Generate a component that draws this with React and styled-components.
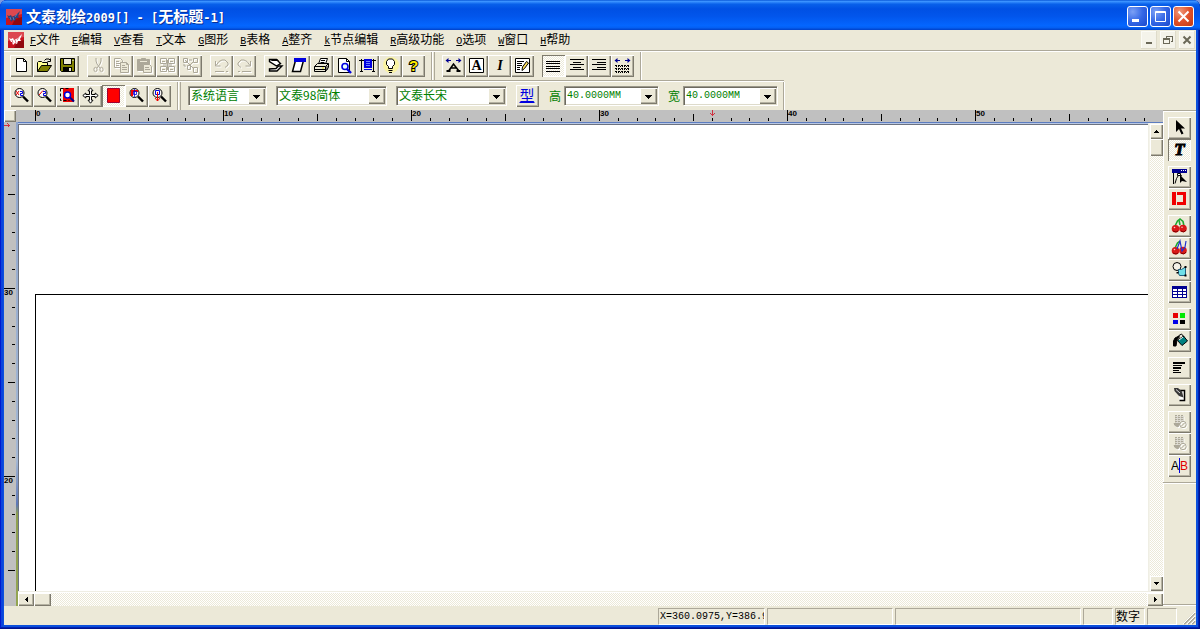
import React from "react";
import styled, { createGlobalStyle, css } from "styled-components";

const GlobalStyle = createGlobalStyle`
  * {
    box-sizing: border-box;
  }
  body {
    margin: 0;
    background: #7b9be0;
    color: #000;
    font-family: "Noto Sans CJK SC", "Liberation Sans", sans-serif;
    font-size: 12px;
    line-height: 16px;
  }
`;

const dither = css`
  background: repeating-conic-gradient(#ffffff 0 25%, #ece9d8 0 50%) 0 0 / 2px 2px;
`;

const raised = css`
  background: #ece9d8;
  border: none;
  border-radius: 0;
  box-shadow: inset 1px 1px 0 #fff, inset -1px -1px 0 #7d7a6d,
    inset -2px -2px 0 #b5b2a2;
`;

const Window = styled.div`
  display: flex;
  flex-direction: column;
  min-height: 100vh;
  padding: 0 4px 4px;
  border-radius: 7px 7px 0 0;
  overflow: hidden;
  background: #0b50dc;
  box-shadow: inset -1px -1px 0 #00138c, inset 1px 0 0 #0019cf,
    inset -2px -2px 0 #0022b4, inset 3px 0 0 #0a43dd;
`;

const TitleBar = styled.header`
  display: flex;
  align-items: center;
  height: 30px;
  margin: 0 -4px;
  padding: 3px 6px 0;
  gap: 4px;
  background: linear-gradient(
    180deg,
    #0a58d8 0,
    #3a92ff 5%,
    #0860ea 14%,
    #0050e4 30%,
    #0256ec 55%,
    #0466ff 85%,
    #0460f4 92%,
    #0040c8 100%
  );
`;

const Title = styled.h1`
  flex: 1;
  margin: 0;
  color: #fff;
  font-size: 15px;
  line-height: 20px;
  font-weight: 700;
  text-shadow: 1px 1px 0 #0a2f96;
  white-space: pre;
`;

const TitleLatin = styled.span`
  font-family: "DejaVu Sans Mono", monospace;
  font-size: 12px;
`;

const CaptionButtons = styled.div`
  display: flex;
  gap: 2px;
`;

const CaptionButton = styled.button`
  width: 21px;
  height: 21px;
  padding: 0;
  display: flex;
  align-items: center;
  justify-content: center;
  border: 1px solid #fff;
  border-radius: 3px;
  background: ${(p) =>
    p.$close
      ? "radial-gradient(circle at 30% 25%, #f09a7c, #e0502a 50%, #c23a12)"
      : "radial-gradient(circle at 25% 25%, #7ba0f5, #3467e6 50%, #1a48cc)"};
`;

const MenuBar = styled.nav`
  display: flex;
  align-items: center;
  height: 20px;
  padding: 0 1px 0 4px;
  background: #ece9d8;
`;

const MenuLink = styled.a`
  padding: 0 6px;
  color: #000;
  text-decoration: none;
  white-space: nowrap;
`;

const Hotkey = styled.span`
  font-family: "Liberation Mono", monospace;
  font-size: 10px;
  text-decoration: underline;
`;

const MdiButtons = styled.div`
  display: flex;
  gap: 3px;
  margin-left: auto;
`;

const MdiButton = styled.button`
  width: 16px;
  height: 18px;
  padding: 0;
  display: flex;
  align-items: center;
  justify-content: center;
  border: none;
  background: #f4f3ea;
  box-shadow: inset -1px -1px 0 #dedbca, inset 1px 1px 0 #fbfbf6;
`;

const ToolArea = styled.div`
  border-top: 1px solid #aca899;
  box-shadow: inset 0 1px 0 #fff;
  background: #ece9d8;
  padding-top: 1px;
`;

const ToolRow = styled.div`
  display: flex;
  width: fit-content;
  height: 28px;
`;

const SecondRow = styled(ToolRow)`
  height: 30px;
  padding-top: 1px;
  border-top: 1px solid #aca899;
  box-shadow: inset 0 1px 0 #fff;
`;

const Band = styled.div`
  display: flex;
  align-items: center;
  gap: ${(p) => p.$gap || 8}px;
  padding: 0 6px 1px;
  border-right: 1px solid #aca899;
  box-shadow: 1px 0 0 #fff;
  & + & {
    margin-left: 2px;
    padding-left: 7px;
    border-left: 1px solid #aca899;
  }
`;

const ButtonGroup = styled.div`
  display: flex;
`;

const ToolButton = styled.button`
  ${raised}
  width: 23px;
  height: 22px;
  padding: 0 1px 1px 0;
  display: flex;
  align-items: center;
  justify-content: center;
  ${(p) =>
    p.$pressed &&
    css`
      ${dither}
      box-shadow: inset 1px 1px 0 #7d7a6d, inset -1px -1px 0 #fff;
    `}
  &:disabled svg {
    color: #aca899;
    filter: drop-shadow(1px 1px 0 #fff);
  }
`;

const TypeButton = styled(ToolButton)`
  color: #0000e0;
  font-family: "Noto Sans CJK SC", sans-serif;
  font-size: 15px;
  line-height: 20px;
  text-decoration: underline;
`;

const Combo = styled.span`
  display: grid;
  grid-template-columns: 1fr 17px;
  width: ${(p) => p.$width}px;
  height: 19px;
  padding: 2px 1px 1px 2px;
  background: #fff;
  box-shadow: inset 1px 1px 0 #9a978a, inset 2px 2px 0 #6d6a5f,
    inset -1px -1px 0 #dedbcb, 1px 1px 0 #fff;
`;

const ComboSelect = styled.select`
  grid-area: 1 / 1 / 2 / 3;
  appearance: none;
  width: 100%;
  height: 16px;
  padding: 0 18px 2px 1px;
  border: none;
  outline: none;
  background: #fff;
  color: #008000;
  font-family: "Noto Sans CJK SC", sans-serif;
  font-size: 12px;
  line-height: 14px;
  ${(p) =>
    p.$mono &&
    css`
      padding-bottom: 0;
      font-family: "Liberation Mono", monospace;
      font-size: 10px;
    `}
`;

const ComboArrow = styled.span`
  ${raised}
  grid-area: 1 / 2 / 2 / 3;
  display: flex;
  align-items: center;
  justify-content: center;
  pointer-events: none;
`;

const SizeField = styled.label`
  display: flex;
  align-items: center;
  gap: 3px;
  color: #008000;
`;

const Main = styled.main`
  flex: 1;
  display: flex;
  background: #ece9d8;
`;

const Workspace = styled.div`
  flex: 1;
  min-width: 0;
  display: flex;
  flex-direction: column;
`;

const RulerRow = styled.div`
  display: flex;
  height: 12px;
  background: #c0c0c0;
`;

const RulerCorner = styled.div`
  ${raised}
  width: 12px;
  margin-right: 1px;
`;

const HRuler = styled.svg`
  flex: 1;
  min-width: 0;
  height: 12px;
  display: block;
`;

const VRulerBox = styled.div`
  width: 12px;
  background: #c0c0c0;
  overflow: hidden;
  contain: size;
`;

const VRuler = styled.svg`
  width: 12px;
  height: 100%;
  display: block;
`;

const DocRow = styled.div`
  flex: 1;
  display: flex;
`;

const DocEdge = styled.div`
  width: 2px;
  background: linear-gradient(#8fa5cc 0, #a3b7d4 70%, #5d78b8 79%, #8fa050 81%, #93a552 100%);
`;

const Document = styled.div`
  flex: 1;
  min-width: 0;
  display: flex;
  flex-direction: column;
  border-top: 1px solid #5c7cc0;
`;

const DocBody = styled.div`
  flex: 1;
  display: flex;
`;

const Canvas = styled.div`
  flex: 1;
  display: flex;
  padding: 170px 0 0 17px;
  background: #fff;
  border-top: 1px solid #b9c8e4;
  box-shadow: inset 1px 1px 0 #6c7280;
`;

const Page = styled.div`
  flex: 1;
  border-top: 1px solid #000;
  border-left: 1px solid #000;
`;

const ScrollTrack = styled.div`
  ${dither}
  flex: 1;
`;

const VScroll = styled.div`
  display: flex;
  flex-direction: column;
  width: 15px;
  padding: 1px 0 0 1px;
  border-left: 1px solid #efeee4;
  background: #f4f3ea;
`;

const HScroll = styled.div`
  display: flex;
  height: 15px;
  padding-top: 1px;
  border-top: 1px solid #efeee4;
  background: #fff;
`;

const ScrollButton = styled.button`
  ${raised}
  width: ${(p) => p.$w}px;
  height: ${(p) => p.$h}px;
  padding: 0;
  display: flex;
  align-items: center;
  justify-content: center;
`;

const SideBar = styled.aside`
  display: flex;
  flex-direction: column;
  width: 33px;
  margin-bottom: 1px;
  border-top: 1px solid #aca899;
  border-bottom: 1px solid #aca899;
  box-shadow: inset 1px 1px 0 #fff, 0 1px 0 #fff;
`;

const SideTools = styled.div`
  display: flex;
  flex-direction: column;
  gap: 5px;
  padding: 6px 5px 5px;
  border-bottom: 1px solid #aca899;
  box-shadow: 0 1px 0 #fff;
`;

const StatusBar = styled.footer`
  display: flex;
  justify-content: flex-end;
  gap: 2px;
  height: 19px;
  padding-top: 2px;
  background: #ece9d8;
`;

const StatusCell = styled.div`
  width: ${(p) => p.$width}px;
  height: 17px;
  overflow: hidden;
  white-space: nowrap;
  border: 1px solid;
  border-color: #aca899 #fff #fff #aca899;
  font-size: 12px;
  line-height: 14px;
  ${(p) =>
    p.$mono &&
    css`
      padding-left: 1px;
      font-family: "Liberation Mono", monospace;
      font-size: 10px;
      line-height: 16px;
    `}
`;

const Grip = styled.svg`
  width: 17px;
  height: 17px;
`;

const Svg = styled.svg`
  width: ${(p) => p.$size || 17}px;
  height: ${(p) => p.$size || 17}px;
  display: block;
`;

const Icon = ({ children }) => (
  <Svg viewBox="0 0 17 17" fill="none" stroke="currentColor" aria-hidden="true">
    {children}
  </Svg>
);

const Lens = ({ children }) => (
  <>
    <circle cx="6.5" cy="6" r="4.5" fill="#fbf8f4" stroke="#000" />
    <path d="M10 9.5l5 5" stroke="#000" strokeWidth="2.4" />
    {children}
  </>
);

const blue = "#0000e0";
const navy = "#000090";
const red = "#f00000";
const teal = "#008080";

const icons = {
  new: (
    <>
      <path d="M3.5 1.5h7l3 3v10h-10z" fill="#fff" />
      <path d="M10.5 1.5v3h3" />
    </>
  ),
  open: (
    <>
      <path d="M1.5 14.5v-9l1-1h3l1 1h5v3" fill="#ffff90" />
      <path d="M1.5 14.5l4-6h10l-4 6z" fill="#808000" />
      <path d="M8.5 3.5L10 2h3l2 2M14.5 1.5v3h-3" />
    </>
  ),
  save: (
    <>
      <path d="M1.5 1.5h14v13h-13l-1-1z" fill="#808000" />
      <path d="M4.5 1.5h8v6h-8z" fill="#ece9d8" />
      <path d="M4 10h9v5H4z" fill="#000" stroke="none" />
      <path d="M10 11h2v3h-2z" fill="#ece9d8" stroke="none" />
      <path d="M13.5 3.5h1" stroke="#fff" />
    </>
  ),
  cut: (
    <>
      <path d="M6 1v3l1 3 3 4M11 1v3l-1 3-3 4" />
      <ellipse cx="5.5" cy="12.5" rx="1.6" ry="2.2" />
      <ellipse cx="11.5" cy="12.5" rx="1.6" ry="2.2" />
    </>
  ),
  copy: (
    <>
      <path d="M1.5 1.5h6l2 2v7h-8zM3 4.5h3M3 6.5h4M3 8.5h3" />
      <path d="M7.5 5.5h6l2 2v8h-8z" fill="#ece9d8" />
      <path d="M9 8.5h3M9 10.5h5M9 12.5h5M13.5 5.5v2h2" />
    </>
  ),
  paste: (
    <>
      <path d="M1.5 2.5h3l1-1h4l1 1h3v11h-12z" fill="currentColor" />
      <path d="M4 4.5h7" stroke="#ece9d8" />
      <path d="M7.5 7.5h6l2 2v6h-8z" fill="#ece9d8" />
      <path d="M9 10.5h4M9 12.5h5" />
    </>
  ),
  group: (
    <>
      <path d="M1.5 1.5h6v5h-6zM9.5 1.5h6v5h-6zM1.5 9.5h6v5h-6zM9.5 9.5h6v5h-6z" />
      <path d="M3 4.5h3M11 4.5h3M3 12.5h3M11 12.5h3M4 8h9M8.5 3v10" />
    </>
  ),
  ungroup: (
    <>
      <path d="M1.5 1.5h4v4h-4zM11.5 1.5h4v4h-4zM5.5 8.5h3v4h-3zM11.5 10.5h4v5h-4z" />
      <path d="M3 3l5 5M12 4L8 8l4 4M10 3L7 3M2 7v2h2" />
    </>
  ),
  undo: (
    <>
      <path d="M2.5 4v5h5M3 8.5l3-4L9 3h3l3 3v2l-3 2.5" />
      <path d="M2 14.5h9M13 14.5h2" />
    </>
  ),
  redo: (
    <>
      <path d="M14.5 4v5h-5M14 8.5l-3-4L8 3H5L2 6v2l3 2.5" />
      <path d="M6 14.5h9M2 14.5h2" />
    </>
  ),
  sigma: (
    <>
      <path d="M2.5 2.5h7l4 4-4 2.5-7-4.5z" fill="#fff" strokeWidth="1.4" />
      <path d="M2 2h8l2 2H5z" fill="#000" stroke="none" />
      <path d="M2.5 14h7.5l5-5h-3.5L9 11.5l-6.5.5z" fill="#fff" strokeWidth="1.4" />
    </>
  ),
  parallelogram: (
    <>
      <path d="M5.5 3.5l-3 11h8l3-11z" fill="#fff" strokeWidth="1.5" />
      <path d="M4 1h12v4H4z" fill={blue} stroke="none" />
    </>
  ),
  print: (
    <>
      <path d="M5.5 7l2-5.5h7l-2 5.5z" fill="#fff" />
      <path d="M8 3.5h4M7.5 5.5h4" />
      <path d="M1.5 9.5l3-3h11v4l-3 4h-11z" fill="#ece9d8" />
      <path d="M1.5 9.5h11l3-3M12.5 9.5v5M1.5 12.5h11M14 9v4M3 14.5h10" />
      <path d="M9 11h2" stroke="#e0e000" />
    </>
  ),
  preview: (
    <>
      <path d="M2.5 1.5h8l3 3v11h-11z" fill="#fff" />
      <path d="M10.5 1.5v3h3" />
      <circle cx="9" cy="9.5" r="3" fill="#e8ffff" stroke={blue} strokeWidth="1.6" />
      <path d="M11 12l4 4" stroke={blue} strokeWidth="2.4" />
    </>
  ),
  plot: (
    <>
      <path d="M2.5 2v13M14.5 2v13M0 3.5h5M12 3.5h5M1 14.5h3M13 14.5h3" />
      <path d="M2 3.5h13" />
      <path d="M5 2h8v9H5z" fill={blue} stroke="none" />
      <path d="M7 4.5h4M7 6.5h4M7 8.5h4" stroke="#7080ff" />
      <path d="M5 12.5h8" stroke={blue} />
    </>
  ),
  bulb: (
    <>
      <circle cx="9" cy="8" r="8" fill="#fff68c" stroke="none" opacity="0.7" />
      <path d="M6.5 11.5v-2l-2-2v-3l2-2.5h4l2 2.5v3l-2 2v2z" fill="#fff" />
      <path d="M6.5 13.5h4M7 15.5h3" />
    </>
  ),
  help: (
    <text
      x="8.5"
      y="13.5"
      fontFamily="Liberation Sans"
      fontSize="15"
      fontWeight="700"
      fill="#ffee00"
      stroke="#000"
      strokeWidth="2"
      paintOrder="stroke"
      textAnchor="middle"
    >
      ?
    </text>
  ),
  spread: (
    <>
      <path d="M4 13.5L8.5 7l5 6.5M6 11h5" strokeWidth="1.6" />
      <path d="M1.5 14h4M11.5 14h4" strokeWidth="2" />
      <path d="M1 3.5h5M11 3.5h5" stroke={navy} />
      <path d="M3.5 1v5L.5 3.5zM13.5 1v5l3-2.5z" fill={navy} stroke="none" />
    </>
  ),
  boxA: (
    <>
      <path d="M1.5 1.5h14v14h-14z" fill="#fff" />
      <text x="8.5" y="13" fontFamily="Liberation Serif" fontSize="14" fontWeight="700" fill="#000" stroke="none" textAnchor="middle">
        A
      </text>
    </>
  ),
  italic: (
    <text x="9" y="13" fontFamily="Liberation Serif" fontSize="14" fontWeight="700" fontStyle="italic" fill="#000" stroke="none" textAnchor="middle">
      I
    </text>
  ),
  edit: (
    <>
      <path d="M1.5 1.5h14v14h-14z" fill="#fff" />
      <path d="M3 4.5h7M3 6.5h5M3 8.5h5M3 10.5h3M3 12.5h3" />
      <path d="M8 13.5l.5-3.5 4-5.5 2 1.5-4 5.5z" fill="#ffe060" stroke="#000" />
    </>
  ),
  alignLeft: <path d="M1 4.5h14M1 6.5h14M1 9.5h14M1 11.5h14M1 14.5h14" />,
  alignCenter: <path d="M2 2.5h14M5 5.5h8M2 7.5h14M5 10.5h8M2 12.5h14" />,
  alignRight: <path d="M1 2.5h14M6 5.5h9M1 7.5h14M6 10.5h9M1 12.5h14" />,
  lineSpace: (
    <>
      <path d="M1 3.5h5M11 3.5h5" stroke={navy} />
      <path d="M3.5 1v5L.5 3.5zM13.5 1v5l3-2.5z" fill={navy} stroke="none" />
      <path d="M1 8.5h15M1 11.5h15M1 14.5h15" strokeDasharray="2 1" />
      <path d="M2 9.5h14M2 12.5h14M2 15.5h14" strokeDasharray="1 1" />
    </>
  ),
  zoomIn: (
    <Lens>
      <path d="M3 4l3 4M6 4L3 8" stroke={red} />
      <path d="M7 4.5h2.5v2h-2v2H10" stroke={blue} />
    </Lens>
  ),
  zoomOut: (
    <Lens>
      <path d="M3 8l4-4.5" stroke={red} />
      <path d="M7 4.5h2.5v2h-2v2H10" stroke={blue} />
    </Lens>
  ),
  zoomWindow: (
    <>
      <path d="M4 1h11v14H4z" fill={red} stroke="none" />
      <path d="M1.5 1.5h9M1.5 1.5v12h9" strokeDasharray="3 2" />
      <circle cx="8.5" cy="8" r="3" fill="#fff" stroke={blue} strokeWidth="1.5" />
      <path d="M11 10.5l4 4" stroke={navy} strokeWidth="2" />
    </>
  ),
  move: (
    <path
      d="M8.5.8l2.5 3H9.5v3.7h3.7V6l3 2.5-3 2.5V9.500H9.5v3.7H11l-2.5 3-2.5-3h1.5V9.5H3.8V11l-3-2.5 3-2.5v1.5h3.7V3.800H6z"
      fill="#fff"
    />
  ),
  redBox: <path d="M2.5 1.5h12v14h-12z" fill="#ff0000" stroke="#a00030" />,
  zoomAll: (
    <Lens>
      <path d="M3 3h7v2H3zM3 5h2v4H3z" fill={red} stroke="none" />
      <path d="M5.5 4.5h3v3h-3zM6.5 2v8" stroke={blue} strokeWidth="0.8" />
    </Lens>
  ),
  zoomPage: (
    <Lens>
      <path d="M4.5 3.5h4v4h-4z" stroke={blue} />
      <path d="M6.5 5v9M4 11l2.5 3L9 11" stroke={red} />
    </Lens>
  ),
  pointer: <path d="M5 1v12l3-3 2.5 5.5 2-1L10 9.5h4z" fill="#000" stroke="none" />,
  text: (
    <text x="8.5" y="14" fontFamily="Liberation Serif" fontSize="17" fontWeight="700" fontStyle="italic" fill="#000" stroke="#000" textAnchor="middle">
      T
    </text>
  ),
  node: (
    <>
      <path d="M1 1h15v4H1z" fill={navy} stroke="none" />
      <path d="M10 2.5h1M12 2.5h1M14 2.5h1" stroke="#fff" />
      <path d="M2.5 5v11M4 15.500l1.500-5 2.500-4 3 1.500" />
      <path d="M6.5 5.5h3v2h-3z" fill="#fff" />
      <path d="M9 7v8l2-2 5 1z" fill="#000" stroke="none" />
    </>
  ),
  outline: <path d="M1 2h4v13H1zM6 2h9v13H6v-3h6V5H6z" fill="#f00000" stroke="none" />,
  cherry: (
    <>
      <path d="M4 9l2.5-5L9 2l3 2.5 1 4.5M8 3l1 5" stroke="#20a830" strokeWidth="1.6" />
      <circle cx="4.5" cy="11.8" r="3.8" fill="#d81818" stroke="none" />
      <circle cx="12" cy="11.5" r="3.8" fill="#d81818" stroke="none" />
      <path d="M2 14l3 1 2-1M10 14l3 1 2-2" stroke="#800000" />
      <circle cx="3.5" cy="10.5" r="0.8" fill="#ffc0c0" stroke="none" />
      <circle cx="11" cy="10.3" r="0.8" fill="#ffc0c0" stroke="none" />
    </>
  ),
  cherryPen: (
    <>
      <path d="M4 9l2.5-5L9 2" stroke="#20a830" strokeWidth="1.6" />
      <circle cx="4.5" cy="11.8" r="3.8" fill="#d81818" stroke="none" />
      <circle cx="12" cy="11.5" r="3.8" fill="#d81818" stroke="none" />
      <path d="M2 14l3 1 2-1M10 14l3 1 2-2" stroke="#800000" />
      <path d="M6 10l3-8 2 10 3-4 1-6" stroke="#2030d0" strokeWidth="1.2" />
      <circle cx="3.5" cy="10.5" r="0.8" fill="#ffc0c0" stroke="none" />
    </>
  ),
  shapes: (
    <>
      <circle cx="6" cy="5.5" r="4" fill="#f4f2e8" />
      <path d="M7.5 8.5h3l4-2.500v8.500h-6l-1-2z" fill="#70e0e8" stroke="#206080" />
      <path d="M13.5 5h2v2h-2zM5.5 11h2v1.500h-2zM13.5 13.5h2v2h-2z" fill="#000" stroke="none" />
    </>
  ),
  table: (
    <>
      <path d="M1 3h15v12H1z" fill={navy} stroke="none" />
      <path d="M2 6h4v2H2zM7 6h4v2H7zM12 6h3v2h-3zM2 9h4v2H2zM7 9h4v2H7zM12 9h3v2h-3zM2 12h4v2H2zM7 12h4v2H7zM12 12h3v2h-3z" fill="#fff" stroke="none" />
    </>
  ),
  palette: (
    <>
      <path d="M2 3h5v5H2z" fill="#e80000" stroke="none" />
      <path d="M9 3h5v5H9z" fill="#00e800" stroke="none" />
      <path d="M2 10h5v4H2z" fill="#0000e8" stroke="none" />
      <path d="M9 10h5v4H9z" fill="#000" stroke="none" />
    </>
  ),
  fill: (
    <>
      <path d="M2.5 14V9L4 6l4-2-2 4-1 6z" fill="#000" />
      <path d="M6.5 8.5l6-4.5 4 5-5.5 4.5z" fill={teal} stroke="#000" />
      <path d="M8 7V3.5L10.5 2 13 5" stroke="#000" />
      <path d="M8 8l4-3" stroke="#fff" />
    </>
  ),
  textLines: (
    <path d="M2 3h12v2H2zM2 6h9v1H2zM2 8h8v2H2zM2 11h6v1H2zM2 13h8v1H2z" fill="#000" stroke="none" />
  ),
  pen: (
    <>
      <path d="M7.5 4.5h6v10h-5" fill="#fff" strokeWidth="1.5" />
      <path d="M3 2h4l4 3.5 1.5 6L8 10 3.5 5z" fill="#383838" stroke="none" />
      <path d="M5 3.5L9 7" stroke="#ddd" />
    </>
  ),
  pattern: (
    <>
      <path d="M4 3h9v5H9v2H4z" fill="currentColor" fillOpacity="0.4" stroke="none" />
      <path d="M4 2.5h9M4 4.5h9M4 6.5h9M4 8.5h5" strokeDasharray="2 1" />
      <circle cx="12" cy="11.5" r="3.2" />
      <path d="M3 10.5h6L7 14l-3-1.5zM10 13.5l4-4" fill="currentColor" />
    </>
  ),
  ab: (
    <>
      <text x="0" y="13" fontFamily="Liberation Sans" fontSize="12" fill="#000" stroke="none">
        A
      </text>
      <text x="9" y="13" fontFamily="Liberation Sans" fontSize="12" fill="#e00000" stroke="none">
        B
      </text>
      <path d="M8.5 1v15" stroke={blue} />
    </>
  ),
};

const AppLogo = ({ light }) => (
  <Svg $size={16} viewBox="0 0 16 16" aria-hidden="true">
    <rect width="16" height="16" fill="#c8141e" />
    <path d="M0 0h16v5L0 9z" fill="#dc4850" />
    <path d="M9 10l7-2v8H6z" fill="#900810" />
    <path
      d="M1 6l2 1 2-1 1 2 2-1 2-1 2-2 2-2-1 3-1 2 1 2-3 0-1 3-2-1-2 2-1-3-1 0z"
      fill={light ? "#fff" : "#2c4078"}
    />
    <path d="M4 8l1 3M7 8l1 3M11 5l-2 3" stroke={light ? "#e08088" : "#6078b0"} />
  </Svg>
);

const Tool = ({ icon, label, pressed, disabled }) => (
  <ToolButton
    type="button"
    aria-label={label}
    aria-pressed={pressed}
    $pressed={pressed}
    disabled={disabled}
  >
    <Icon>{icons[icon]}</Icon>
  </ToolButton>
);

const Arrow = ({ dir, big }) => {
  const d = {
    up: "M1 5h5L3.5 2z",
    down: big ? "M0 2h7L3.5 6z" : "M1 2h5L3.5 5z",
    left: "M5 1v5L2 3.5z",
    right: "M2 1v5l3-2.5z",
  };
  return (
    <Svg $size={7} viewBox="0 0 7 7" shapeRendering="crispEdges" aria-hidden="true">
      <path d={d[dir]} fill="#000" />
    </Svg>
  );
};

const ComboBox = ({ value, label, width, mono, id }) => (
  <Combo $width={width}>
    <ComboSelect id={id} aria-label={label} defaultValue={value} $mono={mono}>
      <option>{value}</option>
    </ComboSelect>
    <ComboArrow>
      <Arrow dir="down" big />
    </ComboArrow>
  </Combo>
);

const menus = [
  ["F", "文件"],
  ["E", "编辑"],
  ["V", "查看"],
  ["T", "文本"],
  ["G", "图形"],
  ["B", "表格"],
  ["A", "整齐"],
  ["k", "节点编辑"],
  ["R", "高级功能"],
  ["O", "选项"],
  ["W", "窗口"],
  ["H", "帮助"],
];

const mainGroups = [
  [
    { icon: "new", label: "新建" },
    { icon: "open", label: "打开" },
    { icon: "save", label: "保存" },
  ],
  [
    { icon: "cut", label: "剪切", disabled: true },
    { icon: "copy", label: "复制", disabled: true },
    { icon: "paste", label: "粘贴", disabled: true },
    { icon: "group", label: "组合", disabled: true },
    { icon: "ungroup", label: "拆分", disabled: true },
  ],
  [
    { icon: "undo", label: "撤销", disabled: true },
    { icon: "redo", label: "重做", disabled: true },
  ],
  [
    { icon: "sigma", label: "路径" },
    { icon: "parallelogram", label: "页面" },
    { icon: "print", label: "打印" },
    { icon: "preview", label: "打印预览" },
    { icon: "plot", label: "刻绘输出" },
    { icon: "bulb", label: "提示" },
    { icon: "help", label: "帮助" },
  ],
];

const textGroups = [
  [
    { icon: "spread", label: "字距" },
    { icon: "boxA", label: "字框" },
    { icon: "italic", label: "斜体" },
    { icon: "edit", label: "编辑文本" },
  ],
  [
    { icon: "alignLeft", label: "左对齐", pressed: true },
    { icon: "alignCenter", label: "居中" },
    { icon: "alignRight", label: "右对齐" },
    { icon: "lineSpace", label: "行距" },
  ],
];

const zoomTools = [
  { icon: "zoomIn", label: "放大" },
  { icon: "zoomOut", label: "缩小" },
  { icon: "zoomWindow", label: "窗口缩放" },
  { icon: "move", label: "平移" },
  { icon: "redBox", label: "填充显示", pressed: true },
  { icon: "zoomAll", label: "全部显示" },
  { icon: "zoomPage", label: "页面显示" },
];

const sideGroups = [
  [
    { icon: "pointer", label: "选择" },
    { icon: "text", label: "文字", pressed: true },
  ],
  [
    { icon: "node", label: "节点" },
    { icon: "outline", label: "轮廓" },
  ],
  [
    { icon: "cherry", label: "图片" },
    { icon: "cherryPen", label: "描图" },
    { icon: "shapes", label: "图形" },
    { icon: "table", label: "表格" },
  ],
  [
    { icon: "palette", label: "颜色" },
    { icon: "fill", label: "填充" },
  ],
  [{ icon: "textLines", label: "段落" }],
  [{ icon: "pen", label: "绘制" }],
  [
    { icon: "pattern", label: "图案", disabled: true },
    { icon: "pattern", label: "纹理", disabled: true },
    { icon: "ab", label: "替换" },
  ],
];

// one ruler unit is 18.8px, a number stands at every tenth unit
const unit = 18.8;
const tickLength = (i) => (i % 10 === 0 ? 11 : i % 5 === 0 ? 7 : 3);

const RulerNumber = ({ x, y, children }) => (
  <text x={x} y={y} fontFamily="Liberation Sans" fontSize="8" fontWeight="700">
    {children}
  </text>
);

const TopRuler = () => (
  <HRuler shapeRendering="crispEdges" aria-hidden="true">
    {Array.from({ length: 60 }, (_, i) => {
      const x = Math.floor(18.4 + i * unit);
      return (
        <React.Fragment key={i}>
          <rect x={x} y={11 - tickLength(i)} width="1" height={tickLength(i)} />
          {i % 10 === 0 && (
            <RulerNumber x={x + 1} y="6">
              {i}
            </RulerNumber>
          )}
        </React.Fragment>
      );
    })}
    <path d="M695.5 0v6M693.5 3.5l2 2 2-2" stroke="#d03040" fill="none" />
  </HRuler>
);

const LeftRuler = () => (
  <VRuler shapeRendering="crispEdges" aria-hidden="true">
    {Array.from({ length: 24 }, (_, i) => {
      const n = i + 2;
      const y = Math.floor(-21.6 + n * unit);
      return (
        <React.Fragment key={n}>
          <rect x={11 - tickLength(n)} y={y} width={tickLength(n)} height="1" />
          {n % 10 === 0 && (
            <RulerNumber x="0" y={y + 7}>
              {40 - n}
            </RulerNumber>
          )}
        </React.Fragment>
      );
    })}
    <path d="M0 3.5h6M3.5 1.5l2 2-2 2" stroke="#d03040" fill="none" />
  </VRuler>
);

const App = () => {
  return (
    <>
      <GlobalStyle />
      <Window>
        <TitleBar>
          <AppLogo />
          <Title>
            文泰刻绘<TitleLatin>2009[] - [</TitleLatin>无标题
            <TitleLatin>-1]</TitleLatin>
          </Title>
          <CaptionButtons>
            <CaptionButton type="button" aria-label="最小化">
              <Svg $size={13} viewBox="0 0 13 13">
                <path d="M1 9h7v3H1z" fill="#fff" />
              </Svg>
            </CaptionButton>
            <CaptionButton type="button" aria-label="最大化">
              <Svg $size={13} viewBox="0 0 13 13">
                <path d="M1.5 1.5h10v10h-10zM1 2.5h11" stroke="#fff" fill="none" />
              </Svg>
            </CaptionButton>
            <CaptionButton type="button" aria-label="关闭" $close>
              <Svg $size={13} viewBox="0 0 13 13">
                <path d="M1.5 1.5l10 10M11.5 1.5l-10 10" stroke="#fff" strokeWidth="2" />
              </Svg>
            </CaptionButton>
          </CaptionButtons>
        </TitleBar>

        <MenuBar>
          <AppLogo light />
          {menus.map(([key, name]) => (
            <MenuLink href="#" key={key}>
              <Hotkey>{key}</Hotkey>
              {name}
            </MenuLink>
          ))}
          <MdiButtons>
            <MdiButton type="button" aria-label="最小化文档">
              <Svg $size={10} viewBox="0 0 10 10">
                <path d="M2 7h6v2H2z" fill="#6a6858" />
              </Svg>
            </MdiButton>
            <MdiButton type="button" aria-label="还原文档">
              <Svg $size={10} viewBox="0 0 10 10" shapeRendering="crispEdges">
                <path d="M3 3V1.5h6.5v5H8M3 1.5h7M.5 4.5h6v4h-6zM0 3.5h7" stroke="#6a6858" fill="none" />
              </Svg>
            </MdiButton>
            <MdiButton type="button" aria-label="关闭文档">
              <Svg $size={10} viewBox="0 0 10 10">
                <path d="M1.5 1.5l7 7M8.5 1.5l-7 7" stroke="#6a6858" strokeWidth="2" />
              </Svg>
            </MdiButton>
          </MdiButtons>
        </MenuBar>

        <ToolArea>
          <ToolRow>
            <Band>
              {mainGroups.map((group, i) => (
                <ButtonGroup key={i}>
                  {group.map((t) => (
                    <Tool key={t.icon} {...t} />
                  ))}
                </ButtonGroup>
              ))}
            </Band>
            <Band>
              {textGroups.map((group, i) => (
                <ButtonGroup key={i}>
                  {group.map((t) => (
                    <Tool key={t.icon} {...t} />
                  ))}
                </ButtonGroup>
              ))}
            </Band>
          </ToolRow>
          <SecondRow>
            <Band>
              <ButtonGroup>
                {zoomTools.map((t) => (
                  <Tool key={t.icon} {...t} />
                ))}
              </ButtonGroup>
            </Band>
            <Band $gap={10}>
              <ComboBox label="语言" value="系统语言" width={78} />
              <ComboBox label="中文字体" value="文泰98简体" width={110} />
              <ComboBox label="字体" value="文泰长宋" width={110} />
              <TypeButton type="button">型</TypeButton>
              <SizeField htmlFor="text-height">
                高
                <ComboBox id="text-height" value="40.0000MM" width={94} mono />
              </SizeField>
              <SizeField htmlFor="text-width">
                宽
                <ComboBox id="text-width" value="40.0000MM" width={94} mono />
              </SizeField>
            </Band>
          </SecondRow>
        </ToolArea>

        <Main>
          <Workspace>
            <RulerRow>
              <RulerCorner />
              <TopRuler />
            </RulerRow>
            <DocRow>
              <VRulerBox>
                <LeftRuler />
              </VRulerBox>
              <DocEdge />
              <Document>
                <DocBody>
                  <Canvas>
                    <Page />
                  </Canvas>
                  <VScroll>
                    <ScrollButton type="button" aria-label="向上" $w={13} $h={15}>
                      <Arrow dir="up" />
                    </ScrollButton>
                    <ScrollButton type="button" aria-label="垂直滑块" $w={13} $h={17} />
                    <ScrollTrack />
                    <ScrollButton type="button" aria-label="向下" $w={13} $h={15}>
                      <Arrow dir="down" />
                    </ScrollButton>
                  </VScroll>
                </DocBody>
                <HScroll>
                  <ScrollButton type="button" aria-label="向左" $w={16} $h={13}>
                    <Arrow dir="left" />
                  </ScrollButton>
                  <ScrollButton type="button" aria-label="水平滑块" $w={17} $h={13} />
                  <ScrollTrack />
                  <ScrollButton type="button" aria-label="向右" $w={16} $h={13}>
                    <Arrow dir="right" />
                  </ScrollButton>
                </HScroll>
              </Document>
            </DocRow>
          </Workspace>
          <SideBar>
            <SideTools>
              {sideGroups.map((group, i) => (
                <div key={i}>
                  {group.map((t) => (
                    <Tool key={t.label} {...t} />
                  ))}
                </div>
              ))}
            </SideTools>
          </SideBar>
        </Main>

        <StatusBar>
          <StatusCell $width={107} $mono>
            X=360.0975,Y=386.9
          </StatusCell>
          <StatusCell $width={126} />
          <StatusCell $width={186} />
          <StatusCell $width={30} />
          <StatusCell $width={30}>数字</StatusCell>
          <StatusCell $width={30} />
          <Grip viewBox="0 0 17 17" aria-hidden="true">
            <path d="M5 16L16 5M9 16l7-7M13 16l3-3" stroke="#aca899" strokeWidth="2" />
            <path d="M4 16L16 4M8 16l8-8M12 16l4-4" stroke="#fff" />
          </Grip>
        </StatusBar>
      </Window>
    </>
  );
};

export default App;
